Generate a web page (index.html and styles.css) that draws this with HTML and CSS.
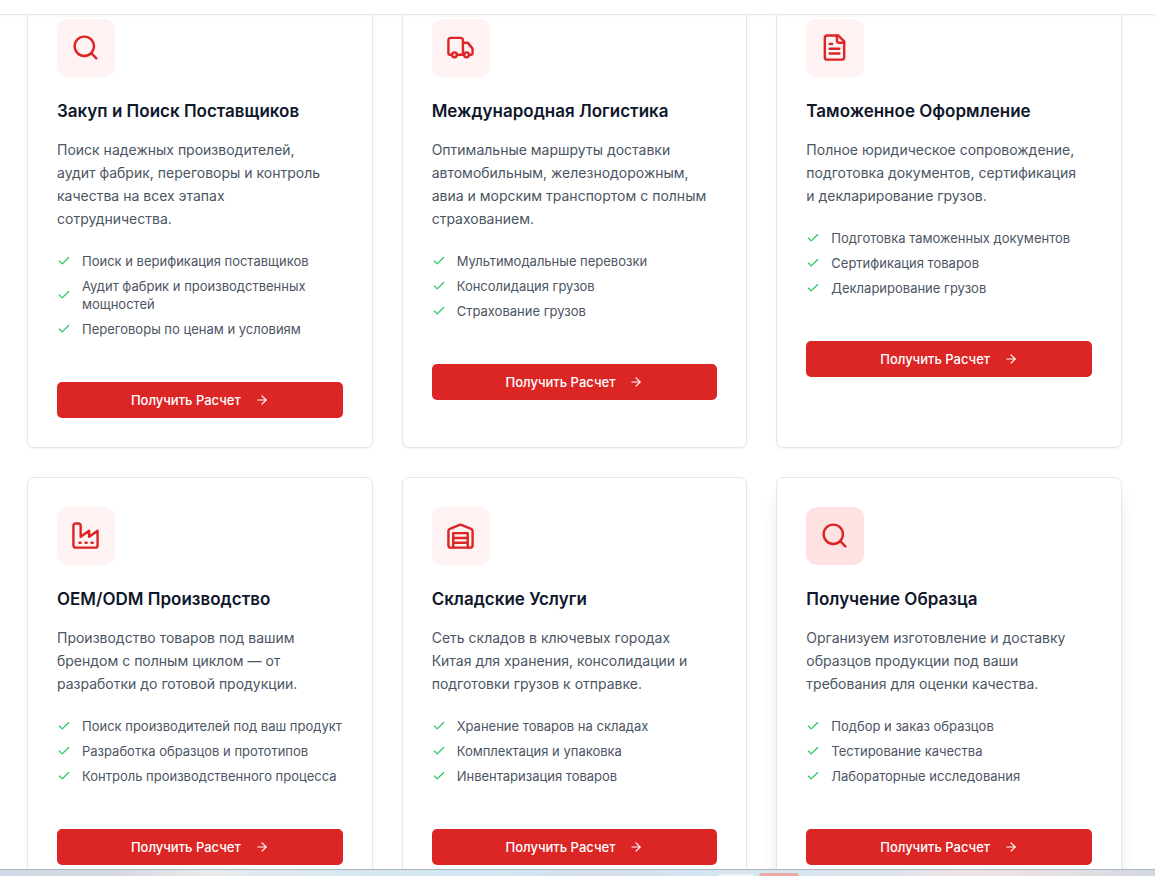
FILE: index.html
```html
<!DOCTYPE html>
<html lang="ru">
<head>
<meta charset="utf-8">
<meta name="viewport" content="width=device-width, initial-scale=1">
<title>Услуги</title>
<link rel="stylesheet" href="styles.css">
</head>
<body>
<svg class="sprite" aria-hidden="true">
  <symbol id="search" viewBox="0 0 24 24"><circle cx="11" cy="11" r="8"/><path d="m21 21-4.3-4.3"/></symbol>
  <symbol id="truck" viewBox="0 0 24 24"><path d="M14 18V6a2 2 0 0 0-2-2H4a2 2 0 0 0-2 2v11a1 1 0 0 0 1 1h2"/><path d="M15 18H9"/><path d="M19 18h2a1 1 0 0 0 1-1v-3.65a1 1 0 0 0-.22-.624l-3.48-4.35A1 1 0 0 0 17.52 8H14"/><circle cx="17" cy="18" r="2"/><circle cx="7" cy="18" r="2"/></symbol>
  <symbol id="file" viewBox="0 0 24 24"><path d="M15 2H6a2 2 0 0 0-2 2v16a2 2 0 0 0 2 2h12a2 2 0 0 0 2-2V7Z"/><path d="M14 2v4a2 2 0 0 0 2 2h4"/><path d="M10 9H8"/><path d="M16 13H8"/><path d="M16 17H8"/></symbol>
  <symbol id="factory" viewBox="0 0 24 24"><path d="M2 20a2 2 0 0 0 2 2h16a2 2 0 0 0 2-2V8l-7 5V8l-7 5V4a2 2 0 0 0-2-2H4a2 2 0 0 0-2 2Z"/><path d="M17 18h1"/><path d="M12 18h1"/><path d="M7 18h1"/></symbol>
  <symbol id="warehouse" viewBox="0 0 24 24"><path d="M22 8.35V20a2 2 0 0 1-2 2H4a2 2 0 0 1-2-2V8.35A2 2 0 0 1 3.26 6.5l8-3.2a2 2 0 0 1 1.48 0l8 3.2A2 2 0 0 1 22 8.35Z"/><path d="M6 18h12"/><path d="M6 14h12"/><path d="M6 22V10h12v12"/></symbol>
  <symbol id="check" viewBox="0 0 24 24"><path d="M20 6 9 17l-5-5"/></symbol>
  <symbol id="arrow" viewBox="0 0 24 24"><path d="M5 12h14"/><path d="m12 5 7 7-7 7"/></symbol>
</svg>
<header class="site-header"></header>
<main class="services">
  <div class="grid">
    <article class="card">
      <div class="tile"><svg class="icon"><use href="#search"/></svg></div>
      <h3 class="title">Закуп и Поиск Поставщиков</h3>
      <p class="text">Поиск надежных производителей, аудит фабрик, переговоры и контроль качества на всех этапах сотрудничества.</p>
      <ul class="features">
        <li><svg class="check"><use href="#check"/></svg><span>Поиск и верификация поставщиков</span></li>
        <li><svg class="check"><use href="#check"/></svg><span>Аудит фабрик и производственных мощностей</span></li>
        <li><svg class="check"><use href="#check"/></svg><span>Переговоры по ценам и условиям</span></li>
      </ul>
      <button class="cta" type="button">Получить Расчет<svg class="arrow"><use href="#arrow"/></svg></button>
    </article>
    <article class="card">
      <div class="tile"><svg class="icon"><use href="#truck"/></svg></div>
      <h3 class="title">Международная Логистика</h3>
      <p class="text">Оптимальные маршруты доставки автомобильным, железнодорожным, авиа и морским транспортом с полным страхованием.</p>
      <ul class="features">
        <li><svg class="check"><use href="#check"/></svg><span>Мультимодальные перевозки</span></li>
        <li><svg class="check"><use href="#check"/></svg><span>Консолидация грузов</span></li>
        <li><svg class="check"><use href="#check"/></svg><span>Страхование грузов</span></li>
      </ul>
      <button class="cta" type="button">Получить Расчет<svg class="arrow"><use href="#arrow"/></svg></button>
    </article>
    <article class="card">
      <div class="tile"><svg class="icon"><use href="#file"/></svg></div>
      <h3 class="title">Таможенное Оформление</h3>
      <p class="text">Полное юридическое сопровождение, подготовка документов, сертификация и декларирование грузов.</p>
      <ul class="features">
        <li><svg class="check"><use href="#check"/></svg><span>Подготовка таможенных документов</span></li>
        <li><svg class="check"><use href="#check"/></svg><span>Сертификация товаров</span></li>
        <li><svg class="check"><use href="#check"/></svg><span>Декларирование грузов</span></li>
      </ul>
      <button class="cta" type="button">Получить Расчет<svg class="arrow"><use href="#arrow"/></svg></button>
    </article>
    <article class="card">
      <div class="tile"><svg class="icon"><use href="#factory"/></svg></div>
      <h3 class="title">OEM/ODM Производство</h3>
      <p class="text">Производство товаров под вашим брендом с полным циклом — от разработки до готовой продукции.</p>
      <ul class="features">
        <li><svg class="check"><use href="#check"/></svg><span>Поиск производителей под ваш продукт</span></li>
        <li><svg class="check"><use href="#check"/></svg><span>Разработка образцов и прототипов</span></li>
        <li><svg class="check"><use href="#check"/></svg><span>Контроль производственного процесса</span></li>
      </ul>
      <button class="cta" type="button">Получить Расчет<svg class="arrow"><use href="#arrow"/></svg></button>
    </article>
    <article class="card">
      <div class="tile"><svg class="icon"><use href="#warehouse"/></svg></div>
      <h3 class="title">Складские Услуги</h3>
      <p class="text">Сеть складов в ключевых городах Китая для хранения, консолидации и подготовки грузов к отправке.</p>
      <ul class="features">
        <li><svg class="check"><use href="#check"/></svg><span>Хранение товаров на складах</span></li>
        <li><svg class="check"><use href="#check"/></svg><span>Комплектация и упаковка</span></li>
        <li><svg class="check"><use href="#check"/></svg><span>Инвентаризация товаров</span></li>
      </ul>
      <button class="cta" type="button">Получить Расчет<svg class="arrow"><use href="#arrow"/></svg></button>
    </article>
    <article class="card card-raised">
      <div class="tile"><svg class="icon"><use href="#search"/></svg></div>
      <h3 class="title">Получение Образца</h3>
      <p class="text">Организуем изготовление и доставку образцов продукции под ваши требования для оценки качества.</p>
      <ul class="features">
        <li><svg class="check"><use href="#check"/></svg><span>Подбор и заказ образцов</span></li>
        <li><svg class="check"><use href="#check"/></svg><span>Тестирование качества</span></li>
        <li><svg class="check"><use href="#check"/></svg><span>Лабораторные исследования</span></li>
      </ul>
      <button class="cta" type="button">Получить Расчет<svg class="arrow"><use href="#arrow"/></svg></button>
    </article>
  </div>
</main>
<footer class="taskbar"><span class="task"></span><span class="task task-red"></span></footer>
</body>
</html>
```
FILE: styles.css
```css
* { box-sizing: border-box; margin: 0; padding: 0; }

body {
  display: flex;
  flex-direction: column;
  height: 100vh;
  overflow: hidden;
  background: #fff;
  color: #4b5563;
  font-family: Inter, "Liberation Sans", sans-serif;
}

svg { fill: none; stroke: currentColor; stroke-width: 2; stroke-linecap: round; stroke-linejoin: round; flex: none; }
.sprite { display: none; }

.site-header {
  position: relative;
  z-index: 1;
  flex: none;
  height: 15px;
  background: #fff;
  border-bottom: 1px solid #e5e7eb;
  box-shadow: 0 1px 2px rgba(0, 0, 0, 0.05);
}

.services { flex: 1; min-height: 0; overflow: hidden; padding: 0 33px 0 27px; }

/* The list is scrolled: the first row starts under the header. */
.grid {
  display: grid;
  grid-template-columns: repeat(3, minmax(0, 1fr));
  gap: 29px;
  margin-top: -26px;
}

.card {
  padding: 29px;
  background: #fff;
  border: 1px solid #e2e8f0;
  border-radius: 7px;
  box-shadow: 0 1px 2px rgba(0, 0, 0, 0.05);
}
.card-raised { box-shadow: 0 18px 22px -4px rgba(0, 0, 0, 0.1), 0 7px 9px -5px rgba(0, 0, 0, 0.1); }

.tile {
  display: flex;
  width: 58px;
  height: 58px;
  padding: 14px;
  border-radius: 11px;
  background: #fef2f2;
  color: #dc2626;
}
.card-raised .tile { background: #fee2e2; }
.icon { width: 29px; height: 29px; }

.title { margin-top: 22px; color: #0f172a; font-size: 17px; font-weight: 600; line-height: 24px; }
.text { margin-top: 15px; padding-right: 8px; font-size: 14px; line-height: 23px; }

.features { display: flex; flex-direction: column; gap: 7px; margin-top: 22px; list-style: none; }
.features li { display: flex; align-items: center; gap: 11px; font-size: 13px; line-height: 18px; }
.check { width: 14px; height: 14px; color: #22c55e; }

.cta {
  display: flex;
  align-items: center;
  justify-content: center;
  gap: 14px;
  width: 100%;
  height: 36px;
  margin-top: 44px;
  border: 0;
  border-radius: 5px;
  background: #dc2626;
  color: #fff;
  font: 500 13px/18px Inter, "Liberation Sans", sans-serif;
}
.arrow { width: 14px; height: 14px; }

.taskbar {
  display: flex;
  justify-content: center;
  align-items: flex-end;
  gap: 5px;
  flex: none;
  height: 7px;
  padding-left: 361px;
  border-top: 1px solid #a9b7c0;
  background: linear-gradient(90deg, #d0d8e7 0%, #d5d9df 10%, #e8eaeb 18%, #d7e8f2 30%, #d4e6f1 42%, #d3dfeb 52%, #d5e7f2 66%, #dde3ee 76%, #efe3e3 84%, #e4e0e4 92%, #d3d8df 100%);
}
.task { width: 36px; height: 2px; border-radius: 3px 3px 0 0; background: #eaf2f8; }
.task-red { width: 40px; height: 3px; background: #e9aaa6; }
```
